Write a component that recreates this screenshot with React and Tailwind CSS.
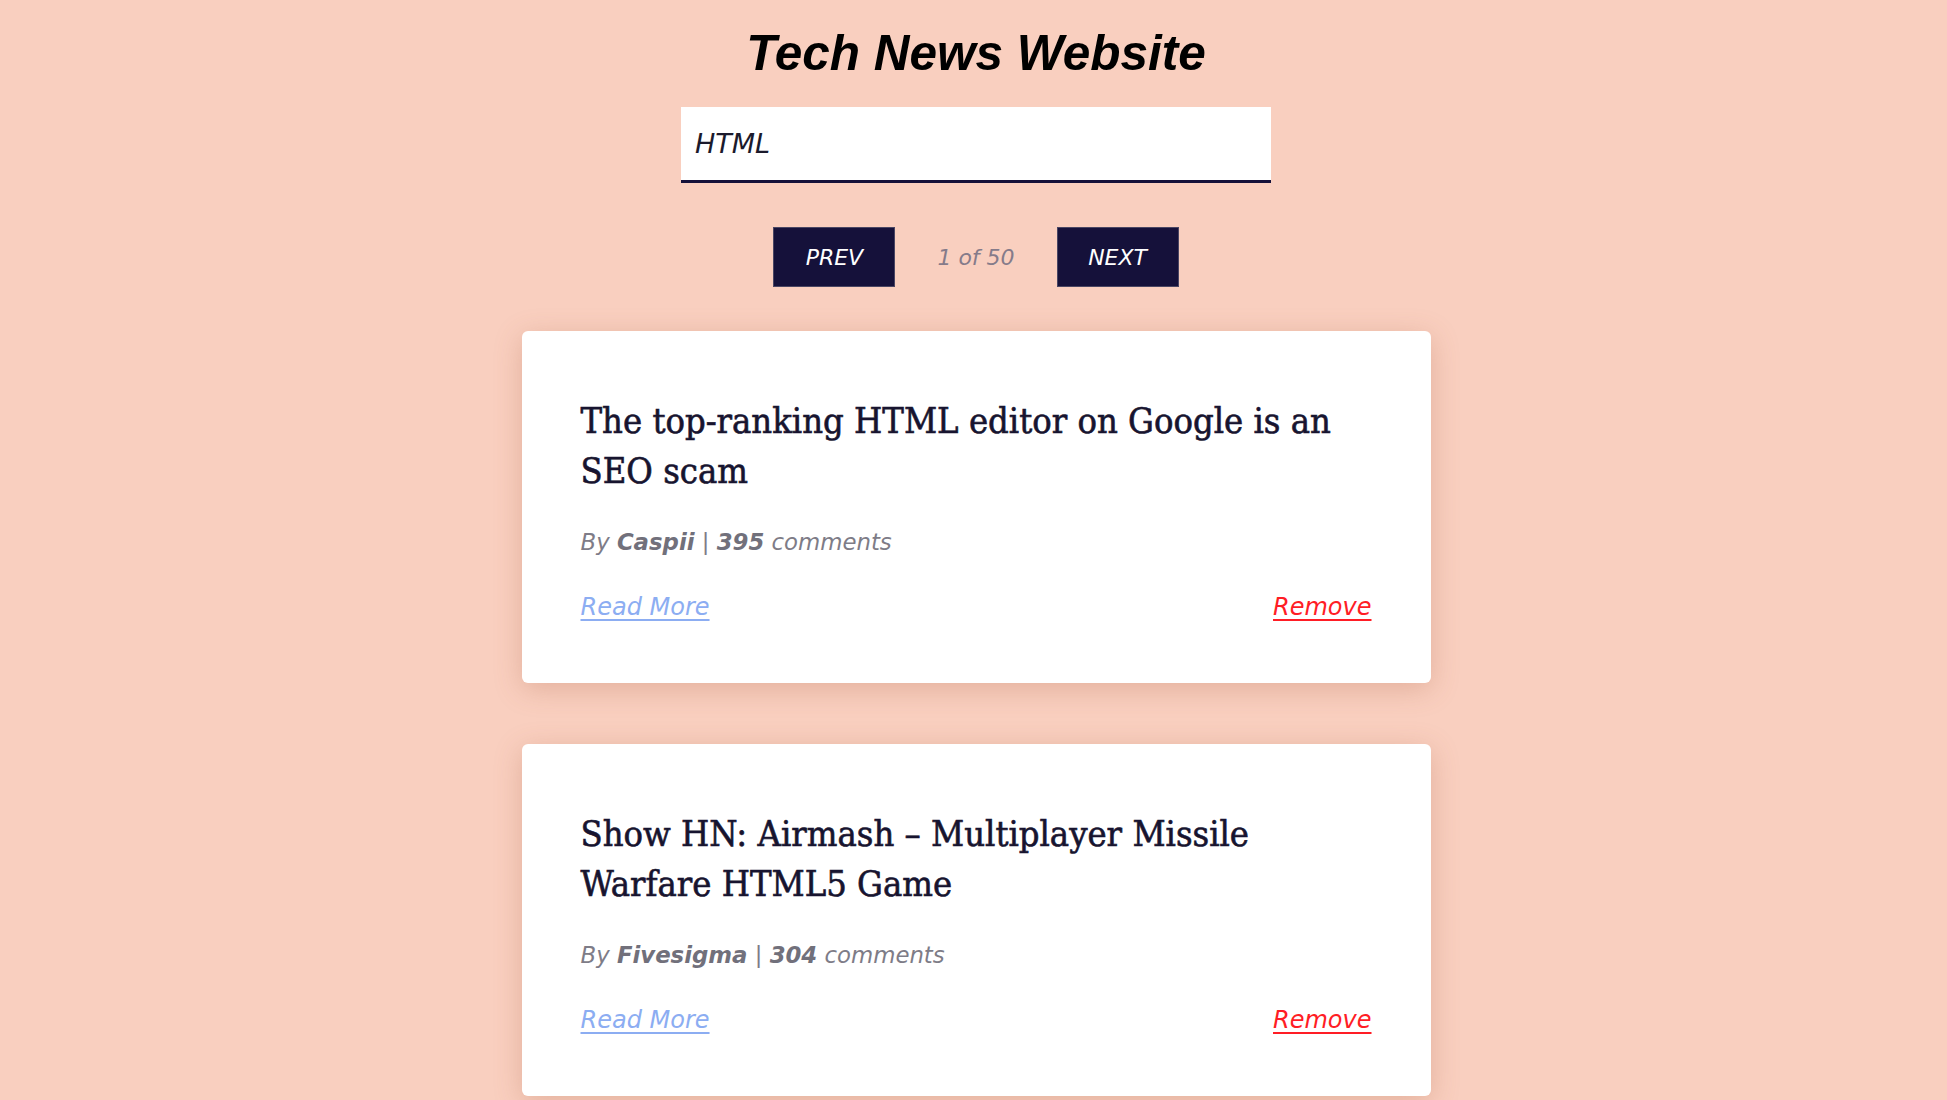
const stories = [
    {
        id: 1,
        title: "The top-ranking HTML editor on Google is an SEO scam",
        author: "Caspii",
        comments: 395,
    },
    {
        id: 2,
        title: "Show HN: Airmash – Multiplayer Missile Warfare HTML5 Game",
        author: "Fivesigma",
        comments: 304,
    },
];

const Story = ({ title, author, comments }) => {
    return (
        <div className="w-[909px] bg-white rounded-md pt-[65px] pb-[59px] px-[59px] shadow-[0_6px_28px_rgba(170,95,65,0.28)]">
            <h2 className="font-['DejaVu_Serif_Condensed',serif] text-[36px] leading-[50px] text-[#17142f] [-webkit-text-stroke:0.6px_#17142f] mb-[30px]">
                {title}
            </h2>
            <p className="italic text-[22.8px] leading-[33px] text-[#7e7c87] mb-[32px]">
                By <span className="font-semibold text-[#71707b]">{author}</span> |{" "}
                <span className="font-semibold text-[#71707b]">{comments}</span> comments
            </p>
            <div className="flex justify-between items-center italic text-[24px] leading-[33px]">
                <a href="#" className="text-[#8cadf2] underline decoration-2 underline-offset-[4px]">
                    Read More
                </a>
                <a href="#" className="text-[#ff1d25] underline decoration-2 underline-offset-[4px]">
                    Remove
                </a>
            </div>
        </div>
    );
};

export default function App() {
    return (
        <div className="min-h-screen bg-[#f9cfbf] font-['DejaVu_Sans',sans-serif] flex flex-col items-center pt-[25px] pl-[5px] pb-16">
            <h1 className="font-['Liberation_Sans',sans-serif] text-[49.5px] leading-[56px] font-bold italic text-black">
                Tech News Website
            </h1>
            <input
                type="text"
                defaultValue="HTML"
                className="mt-[26px] w-[590px] h-[76px] bg-white px-[14px] text-[27px] italic text-[#1b1a2c] border-b-[3px] border-[#15113a] outline-none"
            />
            <div className="flex items-center gap-[42px] mt-[44px]">
                <button className="w-[122px] h-[60px] bg-[#15113a] text-white italic text-[22px] border border-[#4a4663]">
                    PREV
                </button>
                <p className="italic text-[22px] font-light text-[#857b8a]">1 of 50</p>
                <button className="w-[122px] h-[60px] bg-[#15113a] text-white italic text-[22px] border border-[#4a4663]">
                    NEXT
                </button>
            </div>
            <div className="flex flex-col gap-[61px] mt-[44px]">
                {stories.map((s) => (
                    <Story key={s.id} {...s} />
                ))}
            </div>
        </div>
    );
}
